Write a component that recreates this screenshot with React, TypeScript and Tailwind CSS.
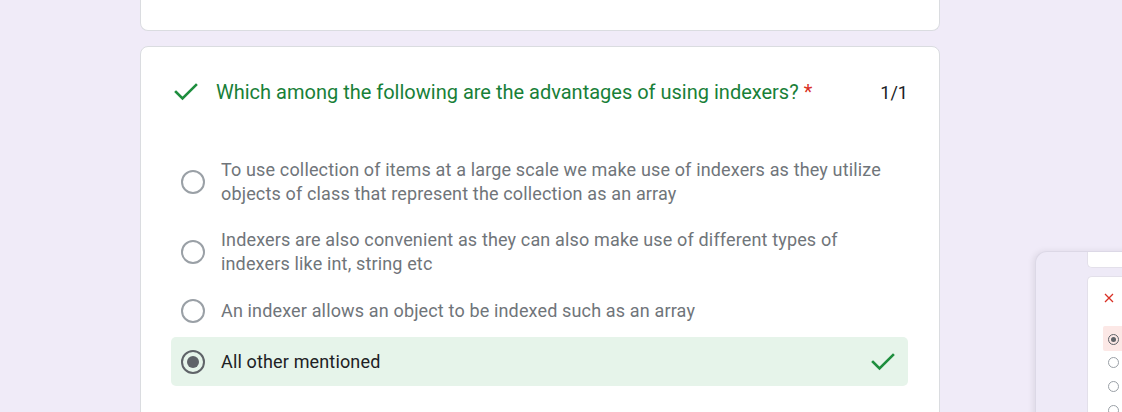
import React from "react";

function Check({ className }: { className?: string }) {
  return (
    <svg viewBox="0 0 24 18" width="24" height="18" className={className}>
      <polyline
        points="2,9 8.5,15.5 22,2"
        fill="none"
        stroke="#1e8e3e"
        strokeWidth="2.6"
        strokeLinecap="square"
      />
    </svg>
  );
}

function Radio({ selected }: { selected?: boolean }) {
  return (
    <div
      className={
        "flex h-6 w-6 shrink-0 items-center justify-center rounded-full border-2 " +
        (selected ? "border-[#5f6368]" : "border-[#9aa0a6]")
      }
    >
      {selected && <div className="h-3 w-3 rounded-full bg-[#5f6368]" />}
    </div>
  );
}

function Option({ lines, className }: { lines: string[]; className: string }) {
  return (
    <div className={"flex items-center pl-[10px] " + className}>
      <Radio />
      <div className="ml-4 text-[18px] leading-6 tracking-[0.15px] text-[#70757a]">
        {lines.map((l) => (
          <div key={l} className="whitespace-nowrap">
            {l}
          </div>
        ))}
      </div>
    </div>
  );
}

function MiniPreview() {
  return (
    <div className="absolute left-[1035px] top-[251px] h-[200px] w-[120px] rounded-tl-[12px] border-l border-t border-[#dcd8e6] bg-[#eeeaf7] shadow-[-2px_0_6px_rgba(0,0,0,0.08)]">
      <div className="ml-[51px] h-[16px] rounded-bl-[5px] border-b border-l border-[#e3e0ea] bg-white" />
      <div className="relative ml-[51px] mt-[8px] h-[200px] rounded-tl-[5px] border-l border-t border-[#e3e0ea] bg-white">
        <svg viewBox="0 0 10 10" width="10" height="10" className="absolute left-[16px] top-[16px]">
          <path d="M1 1L9 9M9 1L1 9" stroke="#d93025" strokeWidth="1.3" />
        </svg>
        <div className="absolute left-[15px] top-[49px] h-[25px] w-[30px] rounded-[2px] bg-[#fce8e6]" />
        <div className="absolute left-[20px] top-[57px] flex h-[11px] w-[11px] items-center justify-center rounded-full border border-[#5f6368]">
          <div className="h-[5px] w-[5px] rounded-full bg-[#5f6368]" />
        </div>
        <div className="absolute left-[20px] top-[80px] h-[11px] w-[11px] rounded-full border border-[#9aa0a6]" />
        <div className="absolute left-[20px] top-[104px] h-[11px] w-[11px] rounded-full border border-[#9aa0a6]" />
        <div className="absolute left-[20px] top-[128px] h-[11px] w-[11px] rounded-full border border-[#9aa0a6]" />
      </div>
    </div>
  );
}

export default function App() {
  return (
    <div
      className="relative h-[412px] w-[1122px] overflow-hidden bg-[#f0ebf8]"
      style={{ fontFamily: "Roboto, 'Noto Sans', sans-serif" }}
    >
      <div className="ml-[140px] w-[800px]">
        <div className="h-[31px] rounded-b-lg border border-t-0 border-[#dadce0] bg-white" />
        <div className="mt-[15px] h-[400px] rounded-lg border border-[#dadce0] bg-white pl-[30px] pr-[31px] pt-[33px]">
          <div className="flex h-6 items-center">
            <Check className="ml-[3px]" />
            <div className="ml-[18px] flex-1 text-[20px] leading-6 text-[#188038]">
              Which among the following are the advantages of using indexers?{" "}
              <span className="text-[#d93025]">*</span>
            </div>
            <div className="text-[18px] text-[#202124]">1/1</div>
          </div>
          <div className="mt-[43px]">
            <Option
              className="py-[11px]"
              lines={[
                "To use collection of items at a large scale we make use of indexers as they utilize",
                "objects of class that represent the collection as an array",
              ]}
            />
            <Option
              className="py-[11px]"
              lines={[
                "Indexers are also convenient as they can also make use of different types of",
                "indexers like int, string etc",
              ]}
            />
            <Option className="py-3" lines={["An indexer allows an object to be indexed such as an array"]} />
            <div className="mt-[2px] flex h-[49px] items-center rounded-[5px] bg-[#e6f4ea] pl-[10px] pr-[13px]">
              <Radio selected />
              <div className="ml-4 flex-1 text-[18px] leading-6 tracking-[0.15px] text-[#202124]">All other mentioned</div>
              <Check />
            </div>
          </div>
        </div>
      </div>
      <MiniPreview />
    </div>
  );
}
